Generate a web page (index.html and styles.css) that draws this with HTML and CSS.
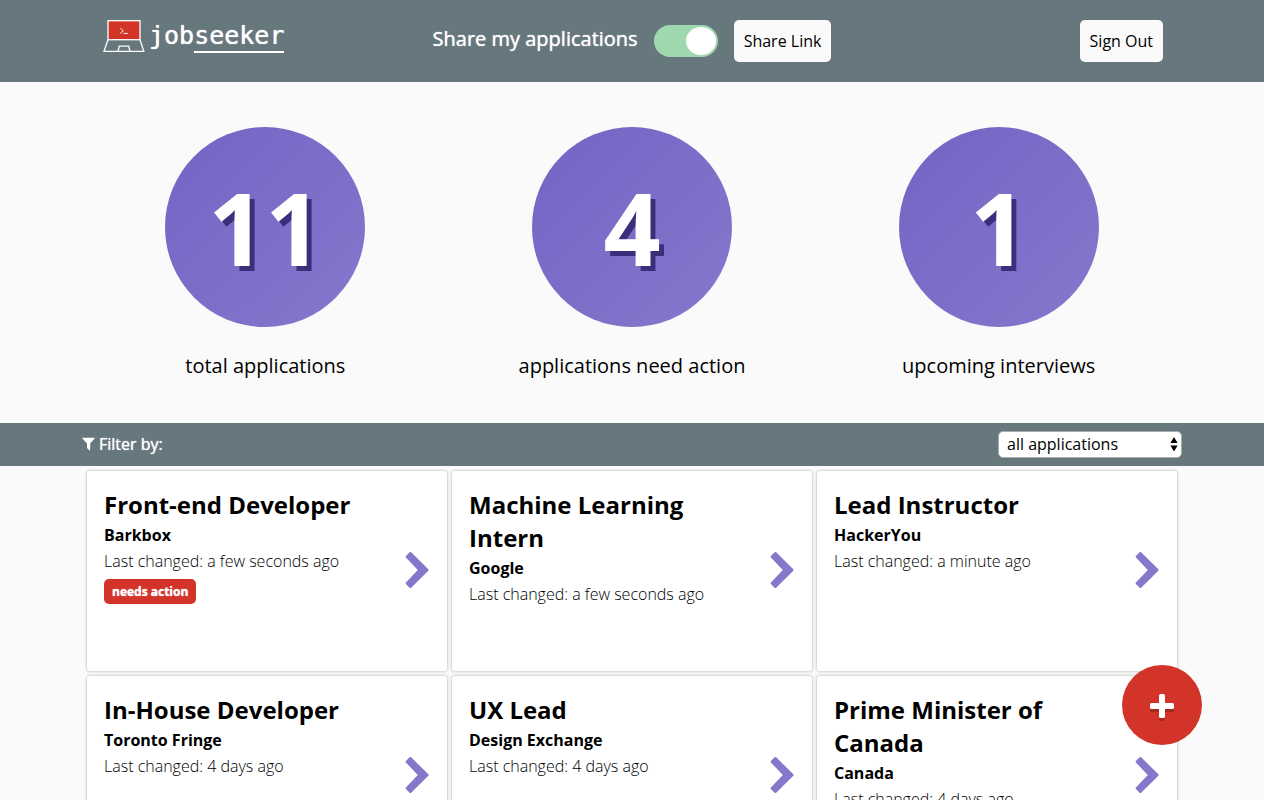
FILE: index.html
```html
<!DOCTYPE html>
<html lang="en">
<head>
<meta charset="utf-8">
<meta name="viewport" content="width=device-width, initial-scale=1">
<title>jobseeker</title>
<link rel="stylesheet" href="styles.css">
</head>
<body>
<svg class="sprite" aria-hidden="true">
  <symbol id="chevron" viewBox="0 0 24 38"><path d="M6.2 1.3 Q5.4 .5 4.6 1.3 L.9 5 Q.2 5.8 .9 6.6 L12.8 19 L.9 31.4 Q.2 32.2 .9 33 L4.6 36.7 Q5.4 37.5 6.2 36.7 L23.3 19.8 Q24 19 23.3 18.2 Z"/></symbol>
</svg>

<header class="header">
  <div class="header-inner">
    <a class="logo" href="#">
      <svg class="logo-icon" width="42" height="34" viewBox="0 0 42 34" fill="none" stroke="#fff" stroke-width="1.3" aria-hidden="true">
        <rect x="5" y=".7" width="32" height="19" fill="#d23429"/>
        <path d="M5 19.7 L1 31.4 H40.8 L37 19.7"/>
        <path d="M15 31 L16.3 26.2 H25.7 L27 31"/>
        <path d="M17.3 8.2 L20.3 10.8 L17.3 13.4 M20.5 13.4 H25" stroke-width=".9"/>
      </svg>
      <span class="logo-text">job<span class="logo-underline">seeker</span></span>
    </a>
    <div class="share">
      <label class="share-label" for="share">Share my applications</label>
      <input class="toggle" type="checkbox" id="share" checked>
      <button class="button" type="button">Share Link</button>
    </div>
    <button class="button sign-out" type="button">Sign Out</button>
  </div>
</header>

<main>
  <section class="stats">
    <div class="stat"><div class="stat-circle">11</div><p class="stat-label">total applications</p></div>
    <div class="stat"><div class="stat-circle">4</div><p class="stat-label">applications need action</p></div>
    <div class="stat"><div class="stat-circle">1</div><p class="stat-label">upcoming interviews</p></div>
  </section>

  <div class="filter">
    <div class="filter-inner">
      <label class="filter-label" for="filter">
        <svg width="13" height="14" viewBox="0 0 13 14" fill="#fff" aria-hidden="true"><path d="M.6 .8 H12.4 Q13 1 12.6 1.6 L8.2 6.4 V13 Q8 13.6 7.4 13.2 L5 11 V6.4 L.4 1.6 Q0 1 .6 .8Z"/></svg>
        Filter by:
      </label>
      <div class="select-wrap">
        <select class="select" id="filter"><option>all applications</option><option>needs action</option></select>
        <svg class="select-arrows" width="8" height="16" viewBox="0 0 8 16" aria-hidden="true"><path d="M4 1 L7.6 7 H.4Z M4 15.4 L.4 9.4 H7.6Z"/></svg>
      </div>
    </div>
  </div>

  <section class="cards">
    <a class="card" href="#"><div class="card-body"><h2 class="card-title">Front-end Developer</h2><p class="company">Barkbox</p><p class="changed">Last changed: a few seconds ago</p><span class="badge">needs action</span></div><svg class="chevron" aria-hidden="true"><use href="#chevron"/></svg></a>
    <a class="card" href="#"><div class="card-body"><h2 class="card-title">Machine Learning Intern</h2><p class="company">Google</p><p class="changed">Last changed: a few seconds ago</p></div><svg class="chevron" aria-hidden="true"><use href="#chevron"/></svg></a>
    <a class="card" href="#"><div class="card-body"><h2 class="card-title">Lead Instructor</h2><p class="company">HackerYou</p><p class="changed">Last changed: a minute ago</p></div><svg class="chevron" aria-hidden="true"><use href="#chevron"/></svg></a>
    <a class="card" href="#"><div class="card-body"><h2 class="card-title">In-House Developer</h2><p class="company">Toronto Fringe</p><p class="changed">Last changed: 4 days ago</p></div><svg class="chevron" aria-hidden="true"><use href="#chevron"/></svg></a>
    <a class="card" href="#"><div class="card-body"><h2 class="card-title">UX Lead</h2><p class="company">Design Exchange</p><p class="changed">Last changed: 4 days ago</p></div><svg class="chevron" aria-hidden="true"><use href="#chevron"/></svg></a>
    <a class="card" href="#"><div class="card-body"><h2 class="card-title">Prime Minister of Canada</h2><p class="company">Canada</p><p class="changed">Last changed: 4 days ago</p></div><svg class="chevron" aria-hidden="true"><use href="#chevron"/></svg></a>
  </section>
</main>

<button class="add" type="button" aria-label="Add application">
  <svg width="24" height="28" viewBox="0 0 24 28" aria-hidden="true">
    <g fill="#a62a22"><rect x="9" y="3" width="6" height="24" rx="1.5"/><rect x="0" y="12" width="24" height="6" rx="1.5"/></g>
    <g fill="#fff"><rect x="9" y="0" width="6" height="24" rx="1.5"/><rect x="0" y="9" width="24" height="6" rx="1.5"/></g>
  </svg>
</button>
</body>
</html>
```
FILE: styles.css
```css
* { box-sizing: border-box; }

body {
  margin: 0;
  background: #fafafa;
  color: #000;
  font-family: "Open Sans", sans-serif;
  font-size: 16px;
}

h2, p { margin: 0; }
a { color: inherit; text-decoration: none; }
.sprite { display: none; }

.header { background: #66777d; padding: 20px; }

.header-inner {
  display: grid;
  grid-template-columns: 1fr auto 1fr;
  align-items: center;
  max-width: 1062px;
  margin: 0 auto;
}

.logo { display: flex; align-items: flex-start; gap: 4px; height: 42px; color: #fff; }
.logo-icon { margin-left: 2px; }
.logo-text {
  font-family: "DejaVu Sans Mono", monospace;
  font-size: 25px;
  line-height: 32px;
  text-shadow: 0 0 1px #fff;
}
.logo-underline { display: inline-block; border-bottom: 2px solid #fff; line-height: 30px; }

.share { display: flex; align-items: center; gap: 16px; }
.share-label {
  color: #fff;
  font-size: 20px;
  line-height: 28px;
  padding-bottom: 4px;
  text-shadow: 0 0 1px #fff;
}

.toggle {
  appearance: none;
  width: 64px;
  height: 32px;
  margin: 0;
  padding: 2px;
  border-radius: 16px;
  background: #9fd8af;
  display: flex;
  justify-content: flex-end;
}
.toggle::before { content: ""; width: 30px; height: 28px; border-radius: 50%; background: #fff; }
.toggle:not(:checked) { justify-content: flex-start; background: #ccc; }

.button {
  height: 42px;
  padding: 0 10px;
  border: 0;
  border-radius: 5px;
  background: #fafafa;
  color: #000;
  font: inherit;
}
.sign-out { justify-self: end; }

.stats {
  display: grid;
  grid-template-columns: repeat(3, 1fr);
  max-width: 1100px;
  margin: 0 auto;
  padding: 45px 0 43px;
}
.stat { display: flex; flex-direction: column; align-items: center; gap: 25px; }
.stat-circle {
  display: flex;
  align-items: center;
  justify-content: center;
  width: 200px;
  height: 200px;
  border-radius: 50%;
  background: linear-gradient(135deg, #7264c4, #8678cc);
  color: #fff;
  font-size: 100px;
  font-weight: 700;
  text-shadow: 5px 5px 0 #3b2f7c;
}
.stat-label { font-size: 20px; line-height: 28px; }

.filter { background: #66777d; padding: 8px 20px; }
.filter-inner {
  display: flex;
  align-items: center;
  justify-content: space-between;
  max-width: 1100px;
  margin: 0 auto;
}
.filter-label {
  display: flex;
  align-items: center;
  gap: 4px;
  padding-bottom: 2px;
  color: #fff;
  text-shadow: 0 0 1px #fff;
}
.select-wrap { position: relative; }
.select {
  appearance: none;
  width: 184px;
  height: 27px;
  padding: 0 24px 2px 8px;
  border: 1px solid #aaa;
  border-radius: 5px;
  background: #fff;
  color: #000;
  font: inherit;
  display: block;
}
.select-arrows { position: absolute; right: 4px; top: 5px; pointer-events: none; }

.cards {
  display: grid;
  grid-template-columns: repeat(3, 1fr);
  gap: 5px;
  max-width: 1090px;
  margin: 0 auto;
  padding: 5px 0;
}
.card {
  display: flex;
  align-items: center;
  justify-content: space-between;
  min-height: 200px;
  padding: 15px 18px 18px 17px;
  border-radius: 3px;
  background: #fff;
  box-shadow: 0 0 3px rgba(0, 0, 0, .35);
}
.card-body { align-self: flex-start; max-width: 264px; }
.card-title { font-size: 24px; font-weight: 700; line-height: 33px; padding-top: 2px; }
.company { font-weight: 700; line-height: 26px; padding-top: 1px; }
.changed { font-weight: 300; line-height: 26px; }
.badge {
  display: inline-block;
  margin-top: 5px;
  padding: 0 8px;
  border-radius: 5px;
  background: #d23429;
  color: #fff;
  font-size: 12px;
  font-weight: 700;
  line-height: 25px;
  text-shadow: 0 0 1px #fff;
}
.chevron { width: 24px; height: 38px; fill: #8577cc; }

.add {
  position: fixed;
  right: 62px;
  bottom: 55px;
  display: flex;
  align-items: center;
  justify-content: center;
  width: 80px;
  height: 80px;
  padding: 6px 0 0;
  border: 0;
  border-radius: 50%;
  background: #d23429;
}
```
